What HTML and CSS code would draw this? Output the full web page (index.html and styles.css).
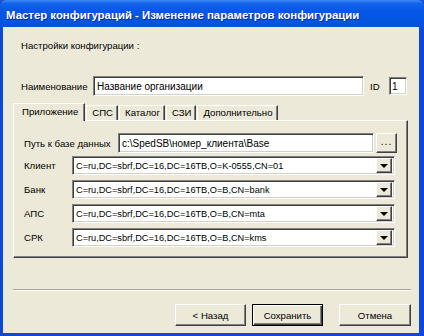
FILE: index.html
```html
<!DOCTYPE html>
<html lang="ru">
<head>
    <meta charset="UTF-8">
    <title>Мастер конфигураций</title>
    <link rel="stylesheet" href="styles.css">
</head>
<body>
    <div class="window">
        <div class="titlebar">
            <span class="title">Мастер конфигураций - Изменение параметров конфигурации</span>
        </div>
        <div class="client">
            <div class="heading">Настройки конфигурации :</div>

            <div class="name-row">
                <span class="name-label">Наименование</span>
                <div class="field name-field">Название организации</div>
                <span class="id-label">ID</span>
                <div class="field id-field">1</div>
            </div>

            <div class="tabs">
                <div class="tab active">Приложение</div>
                <div class="tab">СПС</div>
                <div class="tab">Каталог</div>
                <div class="tab">СЗИ</div>
                <div class="tab">Дополнительно</div>
            </div>
            <div class="panel">
                <div class="row path-row">
                    <span class="label">Путь к базе данных</span>
                    <div class="field path-field">c:\SpedSB\номер_клиента\Base</div>
                    <div class="btn browse">...</div>
                </div>
                <div class="row">
                    <span class="label short">Клиент</span>
                    <div class="field combo">
                        <span class="combo-text">C=ru,DC=sbrf,DC=16,DC=16TB,O=K-0555,CN=01</span>
                        <span class="arrow"></span>
                    </div>
                </div>
                <div class="row">
                    <span class="label short">Банк</span>
                    <div class="field combo">
                        <span class="combo-text">C=ru,DC=sbrf,DC=16,DC=16TB,O=B,CN=bank</span>
                        <span class="arrow"></span>
                    </div>
                </div>
                <div class="row">
                    <span class="label short">АПС</span>
                    <div class="field combo">
                        <span class="combo-text">C=ru,DC=sbrf,DC=16,DC=16TB,O=B,CN=mta</span>
                        <span class="arrow"></span>
                    </div>
                </div>
                <div class="row">
                    <span class="label short">СРК</span>
                    <div class="field combo">
                        <span class="combo-text">C=ru,DC=sbrf,DC=16,DC=16TB,O=B,CN=kms</span>
                        <span class="arrow"></span>
                    </div>
                </div>
            </div>

            <div class="separator"></div>

            <div class="buttons">
                <div class="btn">&lt; Назад</div>
                <div class="btn default">Сохранить</div>
                <div class="btn cancel">Отмена</div>
            </div>
        </div>
    </div>
</body>
</html>
```

FILE: styles.css
```css
* {
    margin: 0;
    padding: 0;
    box-sizing: border-box;
}
body {
    width: 424px;
    height: 336px;
    overflow: hidden;
    font-family: "Liberation Sans", Arial, sans-serif;
    font-size: 9.6px;
    color: #000;
    background: #1c4fd0;
}
.window {
    width: 424px;
    height: 336px;
    display: flex;
    flex-direction: column;
    background: #0a4ad8;
    border-radius: 6px 6px 0 0;
    overflow: hidden;
}
.titlebar {
    height: 27px;
    flex: none;
    display: flex;
    align-items: center;
    padding: 3px 0 0 6px;
    background: linear-gradient(to bottom, #3d8cf6 0%, #1665ec 12%, #0556e4 40%, #0454e2 80%, #0a4fd4 100%);
}
.title {
    color: #fff;
    font-weight: bold;
    font-size: 11.4px;
    text-shadow: 1px 1px 0 #0b2f9a;
    white-space: nowrap;
}
.client {
    flex: 1;
    margin: 0 5px 3px 3px;
    background: #ece9d8;
    padding: 12px 0 0 10px;
    white-space: nowrap;
}
.heading {
    height: 13px;
    line-height: 13px;
    padding-left: 8px;
}

/* поля ввода */
.field {
    background: #fff;
    border: 1px solid;
    border-color: #808080 #fff #fff #808080;
    box-shadow: inset 1px 1px 0 #404040, inset -1px -1px 0 #d4d0c8;
    padding: 0 3px;
    display: flex;
    align-items: center;
    white-space: nowrap;
    overflow: hidden;
    flex: none;
}
.name-row {
    margin-top: 24px;
    display: flex;
    align-items: center;
    height: 20px;
}
.name-label {
    flex: none;
    width: 80px;
    padding-left: 8px;
}
.name-field {
    width: 271px;
    height: 20px;
    font-size: 10px;
}
.id-label {
    margin-left: 6px;
    width: 19px;
}
.id-field {
    width: 18px;
    height: 18px;
    padding: 0 2px;
    font-size: 10px;
}

/* вкладки */
.tabs {
    margin-top: 7px;
    display: flex;
    align-items: flex-end;
    height: 17px;
    position: relative;
    z-index: 1;
}
.tab {
    height: 15px;
    line-height: 13px;
    padding: 0 4px 0 5px;
    border-top: 1px solid #fff;
    border-left: 1px solid #fff;
    border-right: 1px solid #404040;
    box-shadow: inset -1px 0 0 #808080;
    margin-right: 1px;
}
.tab.active {
    height: 18px;
    margin-bottom: -1px;
    padding: 1px 6px 0 8px;
    background: #ece9d8;
}
.panel {
    width: 395px;
    height: 138px;
    border: 1px solid;
    border-color: #fff #404040 #404040 #fff;
    box-shadow: inset -1px -1px 0 #808080;
    padding: 12px 0 0 10px;
}
.row {
    display: flex;
    align-items: center;
    height: 19px;
    margin-top: 5px;
}
.path-row {
    height: 20px;
    margin-top: 0;
    margin-bottom: -2px;
}
.label {
    flex: none;
    width: 94px;
}
.label.short {
    width: 48px;
}
.path-field {
    width: 256px;
    height: 20px;
    font-size: 10px;
}
.combo {
    width: 323px;
    height: 19px;
    padding-right: 2px;
    font-size: 9.2px;
}
.combo-text {
    flex: 1;
    overflow: hidden;
}

/* кнопки */
.btn {
    display: flex;
    align-items: center;
    justify-content: center;
    background: #ece9d8;
    border: 1px solid;
    border-color: #fff #404040 #404040 #fff;
    box-shadow: inset -1px -1px 0 #808080;
}
.browse {
    width: 21px;
    height: 20px;
    margin-left: 2px;
    font-size: 10px;
    letter-spacing: 1px;
    padding-bottom: 3px;
}
.arrow {
    width: 16px;
    height: 15px;
    flex: none;
    background: #ece9d8;
    border: 1px solid;
    border-color: #fff #404040 #404040 #fff;
    box-shadow: inset -1px -1px 0 #808080;
    display: flex;
    align-items: center;
    justify-content: center;
}
.arrow:after {
    content: "";
    border-left: 4px solid transparent;
    border-right: 4px solid transparent;
    border-top: 4px solid #000;
    margin-top: 1px;
}
.separator {
    margin-top: 31px;
    width: 398px;
    height: 2px;
    border-top: 1px solid #aca899;
    border-bottom: 1px solid #fff;
}
.buttons {
    margin-top: 13px;
    display: flex;
    padding-left: 162px;
    height: 22px;
}
.buttons .btn {
    width: 71px;
    height: 22px;
}
.buttons .default {
    margin-left: 6px;
    border: 1px solid #000;
    box-shadow: inset 1px 1px 0 #fff, inset -1px -1px 0 #404040, inset -2px -2px 0 #808080;
}
.buttons .cancel {
    margin-left: 16px;
    width: 72px;
}
```
